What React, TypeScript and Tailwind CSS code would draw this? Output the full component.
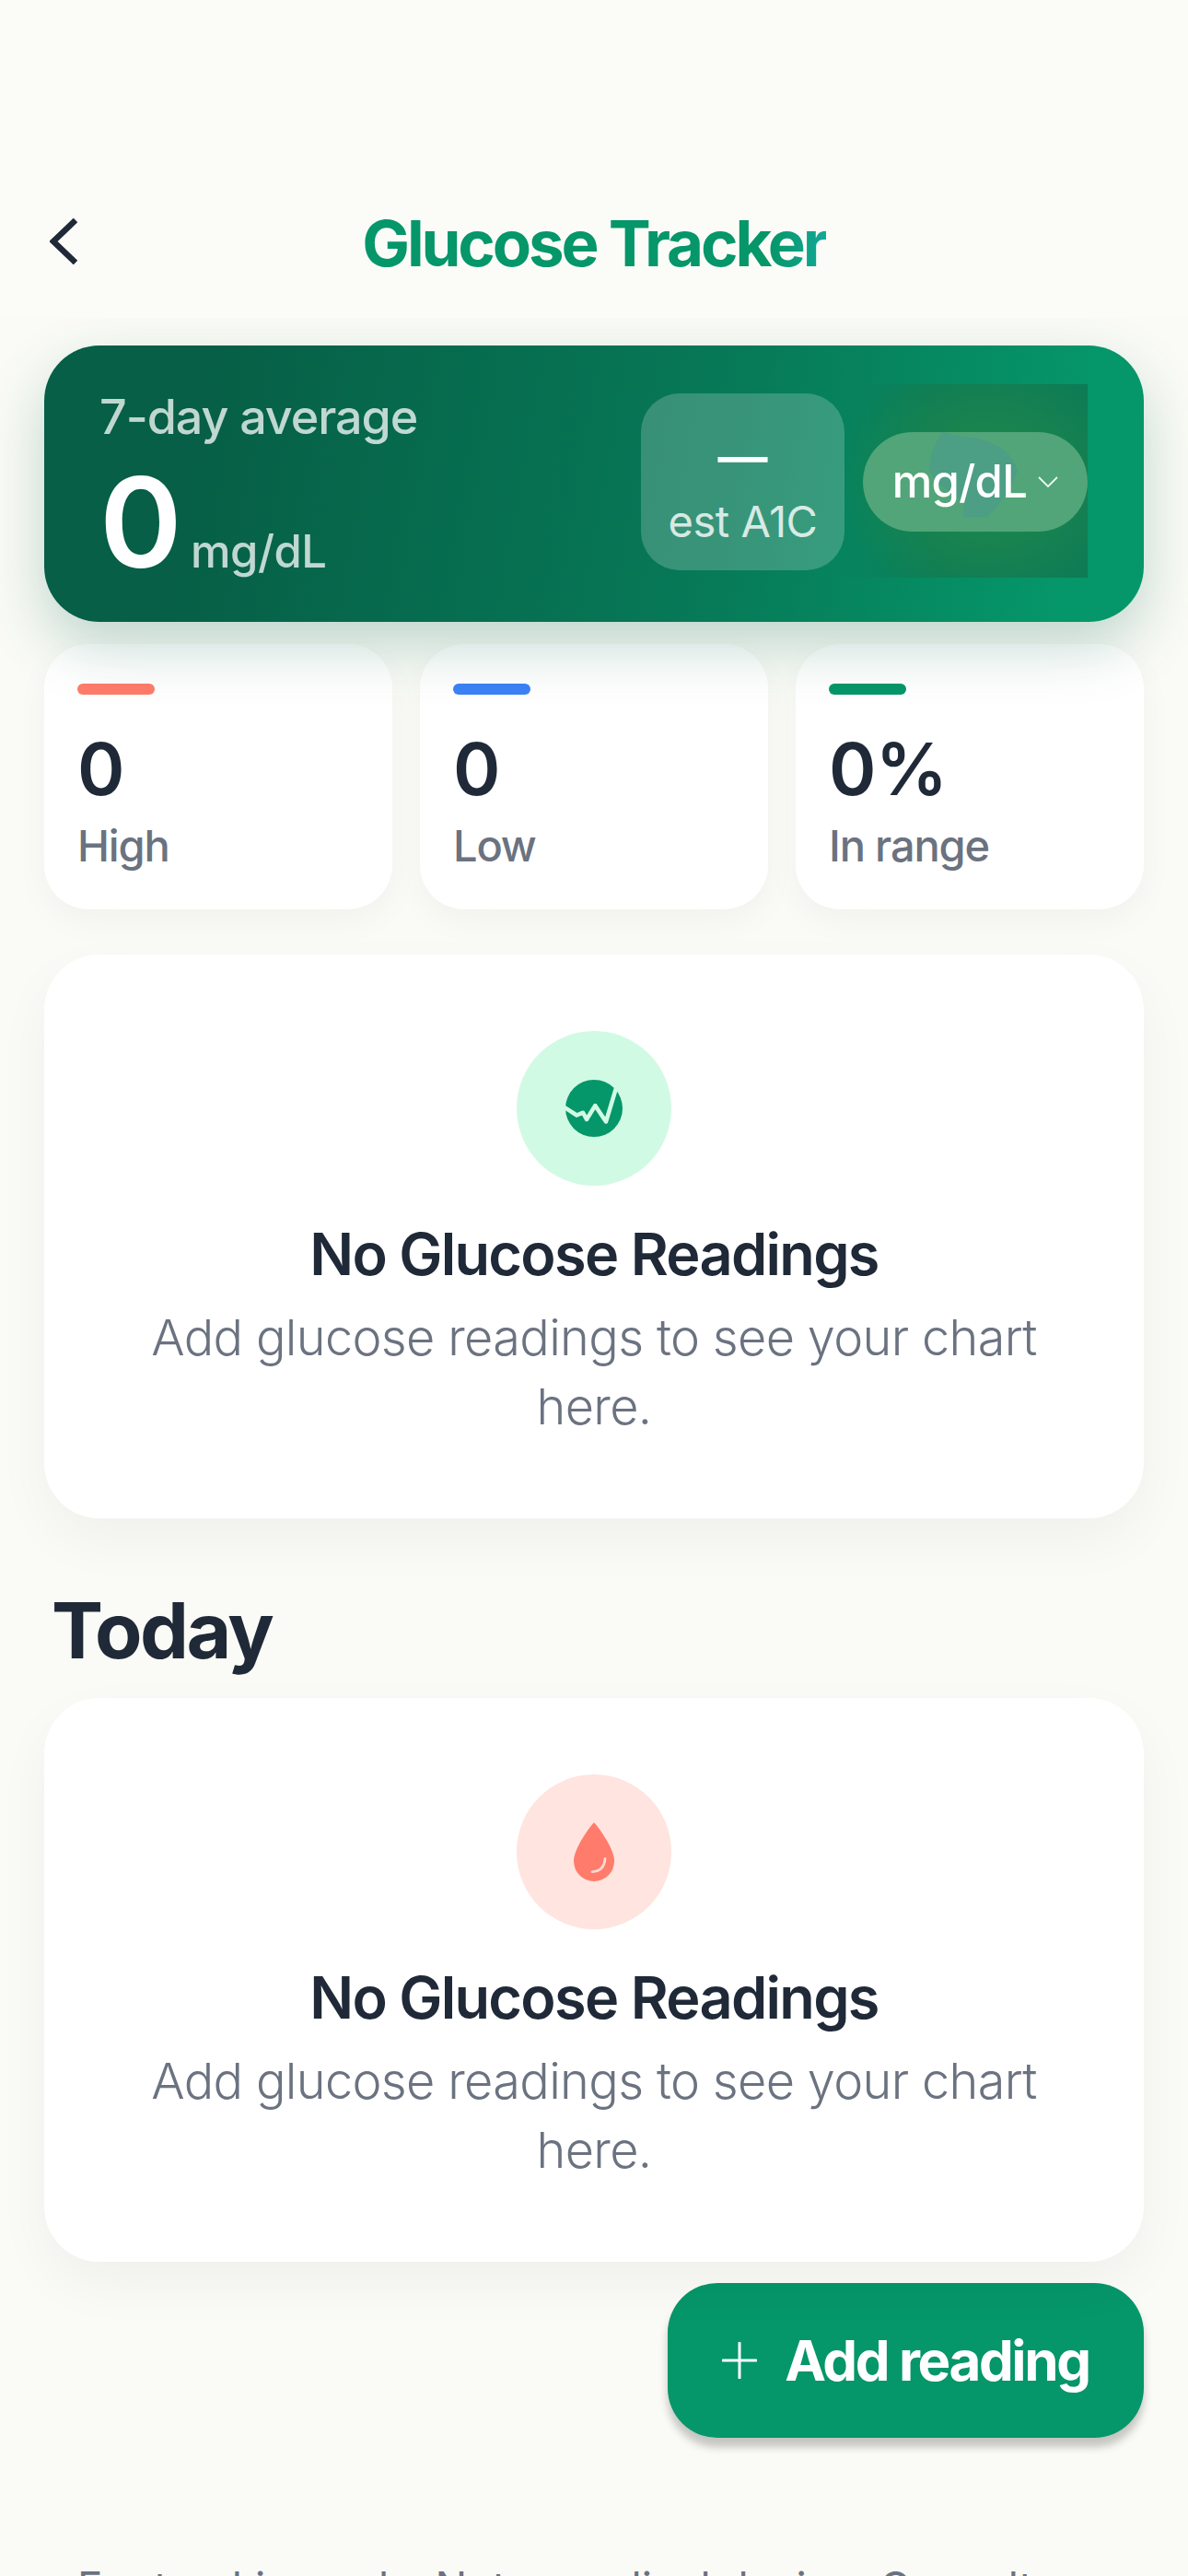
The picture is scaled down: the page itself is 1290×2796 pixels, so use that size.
import React from "react";

const font = { fontFamily: "Inter, 'Liberation Sans', sans-serif" };

function EmptyCard({ children, tint }: { children: React.ReactNode; tint: string }) {
  return (
    <div className="relative flex h-[612px] flex-col items-center rounded-[60px] bg-white pt-[83px] shadow-[0_24px_60px_rgba(0,0,0,0.045)]">
      <div className={`flex h-[168px] w-[168px] items-center justify-center rounded-full ${tint}`}>{children}</div>
      <h2 className="mt-[34px] text-[63px] leading-[80px] font-semibold tracking-[-0.027em] text-[#1f2937]">No Glucose Readings</h2>
      <p className="mt-[13px] w-[1020px] text-center text-[54px] leading-[75px] font-light tracking-[-0.012em] text-[#6b7280]">
        Add glucose readings to see your chart here.
      </p>
    </div>
  );
}

function Stat({ bar, value, label }: { bar: string; value: string; label: string }) {
  return (
    <div className="h-[288px] rounded-[48px] bg-white pt-[43px] pl-[36px] shadow-[0_12px_36px_rgba(0,0,0,0.04)]">
      <div className={`h-[12px] w-[84px] rounded-[6px] ${bar}`} />
      <div className="mt-[34px] text-[78px] leading-[94px] font-semibold tracking-[-0.01em] text-[#1f2937]">{value}</div>
      <div className="mt-[6px] text-[47px] leading-[60px] font-medium tracking-[-0.025em] text-[#6b7280]">{label}</div>
    </div>
  );
}

export default function App() {
  return (
    <div style={font} className="h-[2796px] w-[1290px] overflow-hidden bg-[#fafbf6]">
      <header className="relative z-20 flex h-[345px] items-end justify-between bg-[#fbfcf8] pr-[54px] pb-[45px] pl-[54px]">
        <button aria-label="Back" className="mb-[13px] flex h-[50px] w-[32px] items-center">
          <svg width="30" height="50" viewBox="0 0 30 50" fill="none">
            <path d="M28 2 L4 25 L28 48" stroke="#1f2937" strokeWidth="6.5" />
          </svg>
        </button>
        <h1 className="bg-[linear-gradient(90deg,#059669_88%,#14a897_100%)] bg-clip-text text-[69px] leading-[72px] font-bold tracking-[-0.045em] text-transparent">
          Glucose Tracker
        </h1>
        <div className="w-[32px]" />
      </header>

      <main className="px-[48px] pt-[30px]">
        <section className="relative z-10 flex h-[300px] items-center justify-between rounded-[60px] bg-[linear-gradient(100deg,#065f46_15%,#077a58_62%,#059669_92%)] pr-[61px] pl-[60px] shadow-[0_26px_64px_rgba(6,95,70,0.24)]">
          <div className="absolute top-[42px] right-[61px] h-[210px] w-[269px] bg-[radial-gradient(ellipse_60%_70%_at_60%_50%,#1f8750_0%,#1a844f_40%,rgba(12,122,86,0)_100%),linear-gradient(90deg,rgba(12,122,86,0)_0%,#0c7a56_40%)]" />
          <div className="relative pt-[5px]">
            <div className="text-[52px] leading-[58px] font-medium tracking-[-0.02em] text-white/75">7-day average</div>
            <div className="mt-[20px] flex items-baseline">
              <span className="text-[136px] leading-[130px] font-semibold tracking-[-0.02em] text-white">0</span>
              <span className="ml-[12px] text-[49px] leading-[50px] font-medium tracking-[-0.01em] text-white/75">mg/dL</span>
            </div>
          </div>
          <div className="relative mb-[5px] flex items-center gap-[20px]">
            <div className="flex h-[192px] w-[221px] flex-col items-center rounded-[42px] bg-white/20 pt-[34px]">
              <div className="text-[54px] leading-[70px] font-semibold text-white">—</div>
              <div className="mt-[8px] text-[47px] leading-[54px] font-normal tracking-[-0.01em] text-white/80">est A1C</div>
            </div>
            <div className="relative flex h-[108px] w-[244px] items-center justify-center gap-[12px] rounded-[54px] bg-[#52a578]">
              <svg className="absolute top-0 left-[72px]" width="98" height="92" viewBox="0 0 98 92">
                <path d="M14 0 L37 5 C70 8 90 20 96 42 C90 60 75 80 63 92 L37 92 L37 75 C15 60 0 50 0 38 C2 20 8 10 14 0Z" fill="#4c9e84" />
              </svg>
              <span className="relative text-[49px] leading-[54px] font-medium tracking-[-0.015em] text-white">mg/dL</span>
              <svg className="relative" width="22" height="12" viewBox="0 0 22 12" fill="none">
                <path d="M1 1 L11 11 L21 1" stroke="white" strokeOpacity="0.9" strokeWidth="1.8" />
              </svg>
            </div>
          </div>
        </section>

        <section className="mt-[24px] grid grid-cols-3 gap-[30px]">
          <Stat bar="bg-[#ff7b6b]" value="0" label="High" />
          <Stat bar="bg-[#3b82f6]" value="0" label="Low" />
          <Stat bar="bg-[#059669]" value="0%" label="In range" />
        </section>

        <div className="mt-[49px]">
          <EmptyCard tint="bg-[#d1fae5]">
            <svg width="62" height="62" viewBox="0 0 62 62" fill="none">
              <circle cx="31" cy="31" r="31" fill="#059669" />
              <path d="M0 30.7 L12.3 38.5 L19 35.7 L23 43 L32.3 28 L44 45.5 L55 9" stroke="#d1fae5" strokeWidth="4.5" strokeLinejoin="round" strokeLinecap="round" />
            </svg>
          </EmptyCard>
        </div>

        <h2 className="mt-[74px] mb-[25px] pl-[8px] text-[84px] leading-[96px] font-bold tracking-[-0.03em] text-[#1f2937]">Today</h2>

        <EmptyCard tint="bg-[#ffe4df]">
          <svg width="44" height="64" viewBox="0 0 44 64" fill="none">
            <path d="M22 0 C24 2 44 27 44 42 A22 22 0 0 1 0 42 C0 27 20 2 22 0Z" fill="#ff7b6b" />
            <path d="M20 53.7 Q33 53 34 39.5" stroke="#ffd9d3" strokeWidth="2.8" strokeLinecap="round" />
          </svg>
        </EmptyCard>

        <div className="mt-[23px] flex justify-end">
          <button className="flex h-[168px] w-[517px] items-center justify-center gap-[30px] rounded-[54px] bg-[#059669] shadow-[0_10px_10px_rgba(0,0,0,0.22)]">
            <svg width="38" height="40" viewBox="0 0 38 40" fill="none">
              <path d="M19 1 V39 M1 20 H37" stroke="white" strokeWidth="3" strokeLinecap="round" />
            </svg>
            <span className="text-[60px] leading-[72px] font-bold tracking-[-0.04em] text-white">Add reading</span>
          </button>
        </div>

        <p className="mt-[132px] pl-[36px] text-[46px] leading-[60px] whitespace-nowrap text-[#6b7280]">For tracking only. Not a medical device. Consult</p>
      </main>
    </div>
  );
}
